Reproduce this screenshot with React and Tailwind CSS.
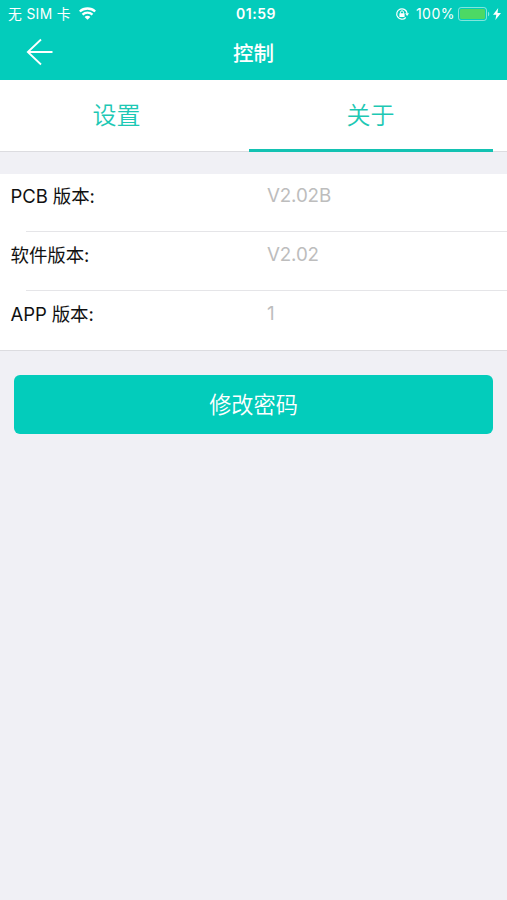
const rows = [
  { label: 'PCB 版本:', value: 'V2.02B', size: 'h-[57px] pt-[8px]', line: true },
  { label: '软件版本:', value: 'V2.02', size: 'h-[58px] pt-[9px]', line: true },
  { label: 'APP 版本:', value: '1', size: 'h-[59px] pt-[9px]', line: false },
];

function WifiIcon() {
  return (
    <svg className="ml-[8px] h-[13px] w-[17px]" viewBox="0 0 17 13" fill="none" stroke="white" strokeWidth="2.3">
      <path d="M0.8 4.5C5.1 0.5 11.9 0.5 16.2 4.5" />
      <path d="M3.5 7.6C6.3 5 10.7 5 13.5 7.6" />
      <path d="M8.5 12.8L5.6 9.9C7.2 8.4 9.8 8.4 11.4 9.9Z" fill="white" stroke="none" />
    </svg>
  );
}

function RotationLockIcon() {
  return (
    <svg className="h-[14px] w-[14px]" viewBox="0 0 14 14" fill="none" stroke="white">
      <path d="M10.8 10.5A5.2 5.2 0 1 1 12.1 6.5" strokeWidth="1.2" />
      <path d="M10.2 6.3H14L12.1 9Z" fill="white" stroke="none" />
      <rect x="4.4" y="6.3" width="5.2" height="3.8" rx="0.5" fill="white" stroke="none" />
      <path d="M5.5 6.5V5.3a1.5 1.5 0 0 1 3 0v1.2" strokeWidth="1" />
    </svg>
  );
}

function BatteryIcon() {
  return (
    <svg className="ml-[3px] h-[14px] w-[32px]" viewBox="0 0 32 14" fill="none">
      <rect x="0.5" y="0.5" width="28" height="13" rx="2.6" stroke="white" strokeOpacity="0.5" />
      <rect x="2" y="2" width="25" height="10" rx="1.4" fill="#4cd964" />
      <path d="M30 4.7C31.7 5.3 31.7 8.7 30 9.3Z" fill="white" fillOpacity="0.55" />
    </svg>
  );
}

function StatusBar() {
  return (
    <div className="grid h-[27px] grid-cols-[1fr_auto_1fr] items-center text-[14px] leading-none text-white">
      <div className="flex items-center pl-[8px]">
        <span className="pt-[2px] text-[13.8px] tracking-[0.35px]">无 SIM 卡</span>
        <WifiIcon />
      </div>
      <span className="pl-[5px] text-[14px] font-semibold tracking-[0.5px]">01:59</span>
      <div className="flex items-center justify-end pr-[6px]">
        <RotationLockIcon />
        <span className="ml-[7px] tracking-[0.5px]">100%</span>
        <BatteryIcon />
        <svg className="ml-[3px] h-[12px] w-[8px]" viewBox="0 0 8 12" fill="white">
          <path d="M5.2 0L0 6.8H3.3L2.4 12L8 5H4.5Z" />
        </svg>
      </div>
    </div>
  );
}

export default function App() {
  return (
    <div className="h-[900px] w-[507px] overflow-hidden bg-[#f0f0f5] font-[Inter,'Noto_Sans_CJK_SC',sans-serif]">
      <header className="h-[80px] bg-[#03ccbb]">
        <StatusBar />
        <div className="grid h-[50px] grid-cols-[1fr_auto_1fr] items-center text-white">
          <button className="ml-[26px] w-[27px]" aria-label="返回">
            <svg className="h-[28px] w-[27px]" viewBox="0 0 27 28" fill="none" stroke="white" strokeWidth="1.8">
              <path d="M15 1.5L1.8 14L15 26.5M1.8 14H26.5" />
            </svg>
          </button>
          <h1 className="pt-[4px] text-[20.5px] font-medium leading-none">控制</h1>
        </div>
      </header>

      <nav className="flex h-[72px] border-b border-[#dcdce0] bg-white text-[24px] font-[350] leading-none text-[#1dc8b4]">
        <button className="w-[233px]">设置</button>
        <button className="-mb-px ml-[16px] w-[244px] border-b-[3px] border-[#13c2b2] pr-px pt-[2px]">关于</button>
      </nav>

      <main>
        <section className="mt-[22px] border-b border-[#dcdce0] bg-white">
          {rows.map((row) => (
            <div key={row.label}>
              <div className={`flex leading-[28px] ${row.size}`}>
                <span className="w-[256px] pl-[10.5px] text-[18.5px] tracking-[-0.1px] text-[#111]">{row.label}</span>
                <span className="pl-[11px] text-[18.8px] tracking-[-0.15px] text-[#bdbdbd]">{row.value}</span>
              </div>
              {row.line && <div className="ml-[26px] h-px bg-[#e5e5e8]" />}
            </div>
          ))}
        </section>
        <button className="mx-[14px] mt-[24px] h-[59px] w-[479px] rounded-[6px] bg-[#03ccbb] pt-[2px] text-[22.2px] font-[350] leading-none text-white">
          修改密码
        </button>
      </main>
    </div>
  );
}
